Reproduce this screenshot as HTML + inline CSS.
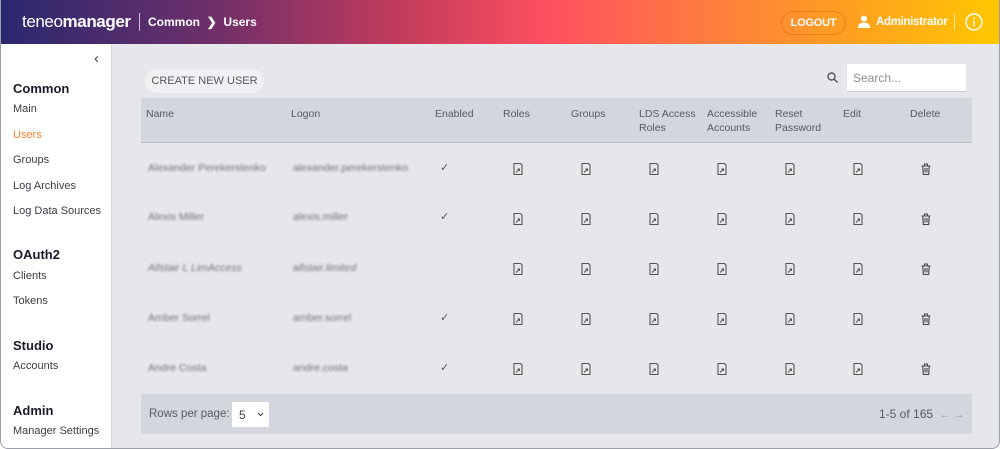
<!DOCTYPE html>
<html><head><meta charset="utf-8"><style>
*{box-sizing:border-box;margin:0;padding:0}
body{width:1000px;height:449px;overflow:hidden;font-family:"Liberation Sans",sans-serif;background:#fff;position:relative}
.frame{position:absolute;left:0;top:0;width:1000px;height:449px;border:1px solid #9a9ea6;border-top:none;border-radius:0 0 8px 8px;overflow:hidden;background:#e6e7eb}
.hdr{position:absolute;left:0;top:0;width:1000px;height:44px;background:linear-gradient(90deg,#2a2870 0%,#6a2f6a 20%,#c23b5c 40%,#ff5060 55%,#ff7a40 70%,#ffa020 85%,#ffc800 100%);color:#fff}
.hdr .logo{position:absolute;left:21px;top:12px;font-size:17px;letter-spacing:-0.4px;white-space:nowrap}
.hdr .sep{position:absolute;left:138px;top:13px;width:1px;height:18px;background:rgba(255,255,255,.7)}
.hdr .bc{position:absolute;left:147px;top:15px;font-size:12px;font-weight:bold;white-space:nowrap}
.logout{position:absolute;left:780px;top:11px;width:65px;height:24px;border:1px solid rgba(200,80,0,.35);border-radius:12px;font-size:11px;font-weight:bold;text-align:center;line-height:22px;letter-spacing:-0.2px}
.admin{position:absolute;left:875px;top:16px;font-size:11.5px;font-weight:bold;letter-spacing:-0.3px;white-space:nowrap}
.side{position:absolute;left:0;top:44px;width:111px;height:405px;background:#fff;border-right:1px solid #d6d8dc}
.side .h{position:absolute;left:12px;font-size:13px;font-weight:bold;color:#1a1a2a}
.side .i{position:absolute;left:12px;font-size:11px;color:#3a3d45}
.btn{position:absolute;left:144px;top:69px;width:119px;height:24px;background:#f0f1f3;border-radius:12px;font-size:11px;color:#555a63;text-align:center;line-height:24px;white-space:nowrap}
.search{position:absolute;left:846px;top:64px;width:119px;height:28px;background:#fff;border-bottom:1px solid #c8cbd0;font-size:12px;color:#8a8e96;padding:7px 6px}
.th{position:absolute;left:140px;top:98px;width:831px;height:45px;background:#d3d6dc;border-bottom:1px solid #b9bdc5}
.t{position:absolute;font-size:10.5px;color:#555a63;line-height:14px;white-space:nowrap}
.blur{position:absolute;font-size:10.5px;color:#70747c;filter:blur(1.1px);white-space:nowrap}
.ck{position:absolute;font-size:11px;color:#555}
.foot{position:absolute;left:140px;top:394px;width:831px;height:40px;background:#d3d6dc}
</style></head><body><div class="frame">
<div class="hdr">
<div class="logo">teneo<b>manager</b></div><div class="sep"></div>
<div class="bc">Common &nbsp;<span style="font-size:12px">&#x276F;</span>&nbsp; Users</div>
<div class="logout">LOGOUT</div>
<svg style="position:absolute;left:857px;top:15px" width="12" height="13" viewBox="0 0 12 13"><circle cx="6" cy="3.5" r="3" fill="#fff"/><path d="M0 13 Q0 7.5 6 7.5 Q12 7.5 12 13Z" fill="#fff"/></svg>
<div class="admin">Administrator</div>
<div style="position:absolute;left:953px;top:14px;width:1px;height:16px;background:rgba(255,255,255,.6)"></div>
<svg style="position:absolute;left:964px;top:13px" width="18" height="18" viewBox="0 0 18 18"><circle cx="9" cy="9" r="8" fill="none" stroke="#fff" stroke-width="1.4"/><rect x="8.3" y="7.5" width="1.4" height="6" fill="#fff"/><circle cx="9" cy="5.2" r="0.9" fill="#fff"/></svg>
</div>
<div class="side">
<div style="position:absolute;left:93px;top:6px;font-size:15px;color:#444">&#x2039;</div>
<div class="h" style="top:37px">Common</div>
<div class="i" style="top:59px">Main</div>
<div class="i" style="top:85px;color:#f5822a">Users</div>
<div class="i" style="top:110px">Groups</div>
<div class="i" style="top:136px">Log Archives</div>
<div class="i" style="top:161px">Log Data Sources</div>
<div class="h" style="top:203px">OAuth2</div>
<div class="i" style="top:226px">Clients</div>
<div class="i" style="top:251px">Tokens</div>
<div class="h" style="top:294px">Studio</div>
<div class="i" style="top:316px">Accounts</div>
<div class="h" style="top:359px">Admin</div>
<div class="i" style="top:381px">Manager Settings</div>
</div>
<div class="btn">CREATE NEW USER</div>
<svg style="position:absolute;left:826px;top:72px" width="11" height="11" viewBox="0 0 11 11"><circle cx="4.5" cy="4.5" r="3.5" fill="none" stroke="#555" stroke-width="1.4"/><path d="M7 7L10.5 10.5" stroke="#555" stroke-width="1.5"/></svg>
<div class="search">Search...</div>
<div class="th"></div>
<div class="t" style="left:145px;top:107px">Name</div>
<div class="t" style="left:290px;top:107px">Logon</div>
<div class="t" style="left:434px;top:107px">Enabled</div>
<div class="t" style="left:502px;top:107px">Roles</div>
<div class="t" style="left:570px;top:107px">Groups</div>
<div class="t" style="left:638px;top:107px">LDS Access<br>Roles</div>
<div class="t" style="left:706px;top:107px">Accessible<br>Accounts</div>
<div class="t" style="left:774px;top:107px">Reset<br>Password</div>
<div class="t" style="left:842px;top:107px">Edit</div>
<div class="t" style="left:909px;top:107px">Delete</div>

<div class="blur" style="left:147px;top:162px">Alexander Perekerstenko</div><div class="blur" style="left:292px;top:162px">alexander.perekerstenko</div><div class="ck" style="left:439px;top:161px">&#x2713;</div>
<div class="blur" style="left:147px;top:211px">Alexis Miller</div><div class="blur" style="left:292px;top:211px">alexis.miller</div><div class="ck" style="left:439px;top:210px">&#x2713;</div>
<div class="blur" style="left:147px;top:262px;font-style:italic">Allstair L LimAccess</div><div class="blur" style="left:292px;top:262px;font-style:italic">allstair.limited</div>
<div class="blur" style="left:147px;top:312px">Amber Sorrel</div><div class="blur" style="left:292px;top:312px">amber.sorrel</div><div class="ck" style="left:439px;top:311px">&#x2713;</div>
<div class="blur" style="left:147px;top:362px">Andre Costa</div><div class="blur" style="left:292px;top:362px">andre.costa</div><div class="ck" style="left:439px;top:361px">&#x2713;</div>

<svg width="1000" height="449" style="position:absolute;left:0;top:0">
<defs>
<g id="d"><path d="M-4 -5.5H2.5L4 -4V5.5H-4Z" fill="none" stroke="#555" stroke-width="1.1"/><path d="M-2 3.5L1.5 0M-0.5 0H1.5V2" fill="none" stroke="#555" stroke-width="1"/></g>
<g id="tr"><path d="M-4.5 -3H4.5M-1.5 -3V-5H1.5V-3M-3.2 -3L-2.7 5.5H2.7L3.2 -3M-1 -1V3.5M1 -1V3.5" fill="none" stroke="#444" stroke-width="1.1"/></g>
</defs>
<g>
<use href="#d" x="517" y="169"/><use href="#d" x="585" y="169"/><use href="#d" x="653" y="169"/><use href="#d" x="721" y="169"/><use href="#d" x="789" y="169"/><use href="#d" x="857" y="169"/><use href="#tr" x="925" y="169"/>
<use href="#d" x="517" y="219"/><use href="#d" x="585" y="219"/><use href="#d" x="653" y="219"/><use href="#d" x="721" y="219"/><use href="#d" x="789" y="219"/><use href="#d" x="857" y="219"/><use href="#tr" x="925" y="219"/>
<use href="#d" x="517" y="269"/><use href="#d" x="585" y="269"/><use href="#d" x="653" y="269"/><use href="#d" x="721" y="269"/><use href="#d" x="789" y="269"/><use href="#d" x="857" y="269"/><use href="#tr" x="925" y="269"/>
<use href="#d" x="517" y="319"/><use href="#d" x="585" y="319"/><use href="#d" x="653" y="319"/><use href="#d" x="721" y="319"/><use href="#d" x="789" y="319"/><use href="#d" x="857" y="319"/><use href="#tr" x="925" y="319"/>
<use href="#d" x="517" y="369"/><use href="#d" x="585" y="369"/><use href="#d" x="653" y="369"/><use href="#d" x="721" y="369"/><use href="#d" x="789" y="369"/><use href="#d" x="857" y="369"/><use href="#tr" x="925" y="369"/>
</g></svg>
<div class="foot">
<div class="t" style="left:8px;top:13px;font-size:11.5px">Rows per page:</div>
<div style="position:absolute;left:91px;top:8px;width:37px;height:25px;background:#fff;font-size:12px;color:#444;padding:6px 7px;white-space:nowrap">5</div>
<svg style="position:absolute;left:116px;top:18px" width="7" height="5" viewBox="0 0 7 5"><path d="M1 1L3.5 3.5L6 1" fill="none" stroke="#444" stroke-width="1.1"/></svg>
<div class="t" style="left:738px;top:13px;font-size:12px">1-5 of 165 <span style="color:#999;font-size:11px">&nbsp;&#x2190; &#x2192;</span></div>
</div>
</div></body></html>
